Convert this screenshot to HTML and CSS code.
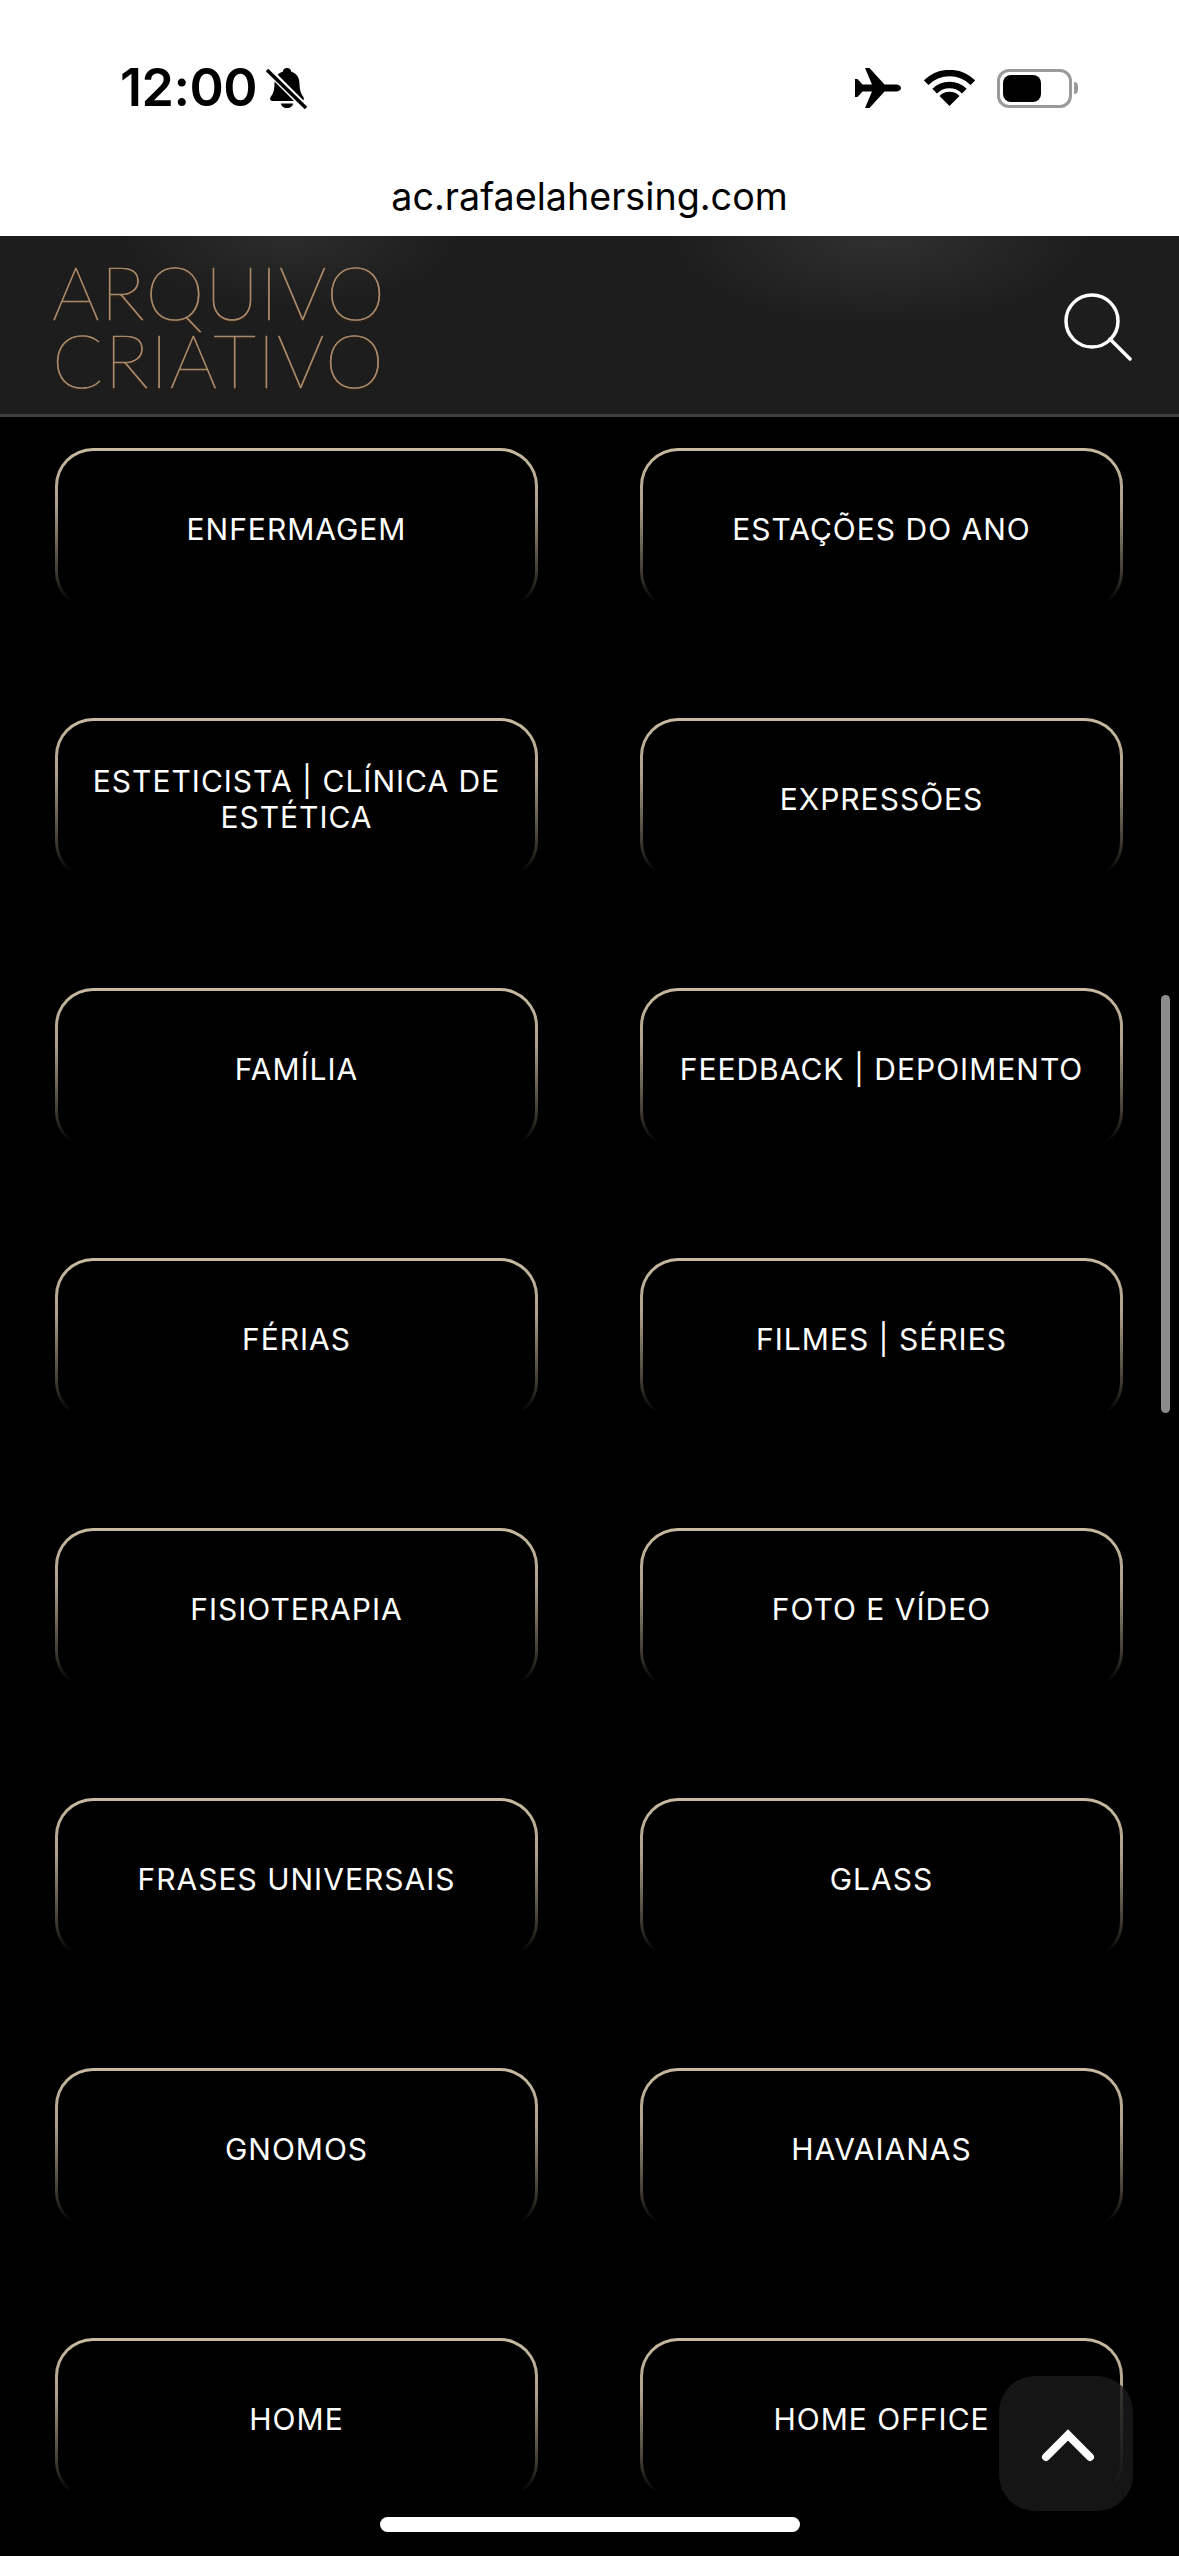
FILE: index.html
```html
<!DOCTYPE html>
<html lang="pt-BR">
<head>
<meta charset="utf-8">
<title>Arquivo Criativo</title>
<link rel="stylesheet" href="styles.css">
</head>
<body>
<div class="screen">
  <div class="browser">
    <div class="status">
      <div class="status-left">
        <span class="time">12:00</span>
        <svg class="bell" viewBox="0 0 42 40"><path d="M21 0c-2.500 0-4 1.600-4.300 3.700C11 5.500 8.500 10 8.500 16c0 6-1.500 10-3.500 12.500-1.800 2.200-.8 4.500 2 4.500h28c2.800 0 3.800-2.300 2-4.500-2-2.500-3.500-6.500-3.500-12.500 0-6-2.500-10.500-8.200-12.300C25 1.600 23.500 0 21 0z"/><path d="M15 35.500h12c0 2.600-2.600 4.500-6 4.500s-6-1.900-6-4.500z"/><path class="slash-gap" d="M-1 -1 41 41"/><path class="slash" d="M1 2 40 40"/></svg>
      </div>
      <div class="status-right">
        <svg class="plane" viewBox="0 0 46 40"><path d="M46 20c0-2.200-2.400-3.500-5.500-3.500H29.500L14.500 0H10l7 16.500H7.500L2.500 11H0v18h2.500l5-5.500H17L10 40h4.500l15-16.500h11C43.600 23.500 46 22.200 46 20z"/></svg>
        <svg class="wifi" viewBox="0 0 51 40"><path class="arc" d="M2.200 12.700A33 33 0 0 1 48.800 12.700"/><path class="arc" d="M10.650 21.150A21 21 0 0 1 40.350 21.150"/><path d="M25.500 36 15.500 26A14 14 0 0 1 35.500 26z"/></svg>
        <div class="battery"><div class="battery-body"><div class="battery-fill"></div></div><div class="battery-nub"></div></div>
      </div>
    </div>
    <div class="url">ac.rafaelahersing.com</div>
  </div>
  <header class="site-header">
    <div class="logo"><span class="logo-a">ARQUIVO</span><span class="logo-b">CRIATIVO</span></div>
    <svg class="search" viewBox="0 0 68 68"><circle cx="28" cy="28" r="26"/><path d="M46 46 66 66"/></svg>
  </header>
  <main class="grid">
    <a class="tile">ENFERMAGEM</a>
    <a class="tile">ESTAÇÕES DO ANO</a>
    <a class="tile">ESTETICISTA | CLÍNICA DE ESTÉTICA</a>
    <a class="tile">EXPRESSÕES</a>
    <a class="tile">FAMÍLIA</a>
    <a class="tile">FEEDBACK | DEPOIMENTO</a>
    <a class="tile">FÉRIAS</a>
    <a class="tile">FILMES | SÉRIES</a>
    <a class="tile">FISIOTERAPIA</a>
    <a class="tile">FOTO E VÍDEO</a>
    <a class="tile">FRASES UNIVERSAIS</a>
    <a class="tile">GLASS</a>
    <a class="tile">GNOMOS</a>
    <a class="tile">HAVAIANAS</a>
    <a class="tile">HOME</a>
    <a class="tile">HOME OFFICE</a>
  </main>
  <div class="scrollbar"></div>
  <button class="to-top"><svg viewBox="0 0 134 135"><path d="M47 81 69 59 91 81"/></svg></button>
  <div class="home-indicator"></div>
</div>
</body>
</html>
```

FILE: styles.css
```css
* { box-sizing: border-box; }
html, body { margin: 0; padding: 0; background: #000; }
.screen {
  position: relative;
  width: 1179px;
  height: 2556px;
  overflow: hidden;
  background: #000;
  font-family: Inter, "Liberation Sans", sans-serif;
}
.browser { background: #fff; height: 236px; color: #000; }
.status {
  height: 176px;
  display: flex;
  align-items: center;
  justify-content: space-between;
  padding: 0 101px 0 120px;
}
.status-left { display: flex; align-items: center; gap: 9px; }
.time { font-size: 52px; font-weight: 600; line-height: 60px; letter-spacing: -0.5px; }
.bell { width: 42px; height: 40px; overflow: visible; }
.slash-gap { stroke: #fff; stroke-width: 7; fill: none; }
.slash { stroke: #000; stroke-width: 3.500; fill: none; }
.status-right { display: flex; align-items: center; }
.plane { width: 46px; height: 40px; margin-right: 23px; }
.wifi { width: 51px; height: 40px; margin: 3px 22px 0 0; }
.arc { fill: none; stroke: #000; stroke-width: 6.500; }
.battery { display: flex; align-items: center; }
.battery-body {
  width: 75px;
  height: 39px;
  border: 3px solid #9a9a9a;
  border-radius: 12px;
  padding: 3px;
}
.battery-fill { width: 38px; height: 27px; background: #000; border-radius: 8px; }
.battery-nub { width: 4px; height: 12px; background: #9a9a9a; border-radius: 0 6px 6px 0; margin-left: 2px; }
.url {
  text-align: center;
  font-size: 37.700px;
  line-height: 44px;
  margin-top: -2px;
}
.site-header {
  height: 181px;
  display: flex;
  align-items: center;
  justify-content: space-between;
  padding: 0 47px 0 52px;
  border-bottom: 3px solid #404040;
  background:
    radial-gradient(ellipse 210px 90px at 880px 0, #303030, rgba(48,48,48,0)),
    radial-gradient(ellipse 170px 70px at 290px 0, #2c2c2c, rgba(44,44,44,0)),
    #1d1d1d;
}
.logo {
  display: flex;
  flex-direction: column;
  font-family: Lato, sans-serif;
  font-weight: 100;
  font-size: 75px;
  line-height: 68px;
  white-space: nowrap;
  color: #c4a283;
  -webkit-text-stroke: 0.7px #a98868;
  text-shadow: 0 2px 2px rgba(60, 35, 15, 0.9);
}
.logo-a { letter-spacing: 0.7px; }
.logo-b { letter-spacing: 1.250px; }
.search { width: 68px; height: 68px; margin-top: 4px; fill: none; stroke: #fff; stroke-width: 3.500; stroke-linecap: round; }
.grid {
  display: grid;
  grid-template-columns: 483px 483px;
  column-gap: 102px;
  row-gap: 108px;
  padding: 31px 0 0 55px;
}
.tile {
  height: 162px;
  display: flex;
  align-items: center;
  justify-content: center;
  text-align: center;
  padding: 0 30px;
  color: #fff;
  font-size: 30px;
  line-height: 36px;
  letter-spacing: 1px;
  border: 3px solid transparent;
  border-radius: 38px;
  background:
    linear-gradient(#000, #000) padding-box,
    linear-gradient(#c9bba2 0%, #aca08a 35%, #5a5348 66%, #2f2c26 82%, rgba(20,18,15,0) 95%) border-box;
}
.scrollbar {
  position: absolute;
  left: 1161px;
  top: 995px;
  width: 9px;
  height: 418px;
  border-radius: 5px;
  background: #8c8c8c;
}
.to-top {
  position: absolute;
  left: 999px;
  top: 2376px;
  width: 134px;
  height: 135px;
  padding: 0;
  border: 0;
  border-radius: 36px;
  background: rgba(26, 26, 26, 0.82);
}
.to-top svg { display: block; width: 134px; height: 135px; fill: none; stroke: #fff; stroke-width: 8; stroke-linecap: round; stroke-linejoin: miter; }
.home-indicator {
  position: absolute;
  left: 380px;
  top: 2517px;
  width: 420px;
  height: 15px;
  border-radius: 8px;
  background: #fff;
}
```
